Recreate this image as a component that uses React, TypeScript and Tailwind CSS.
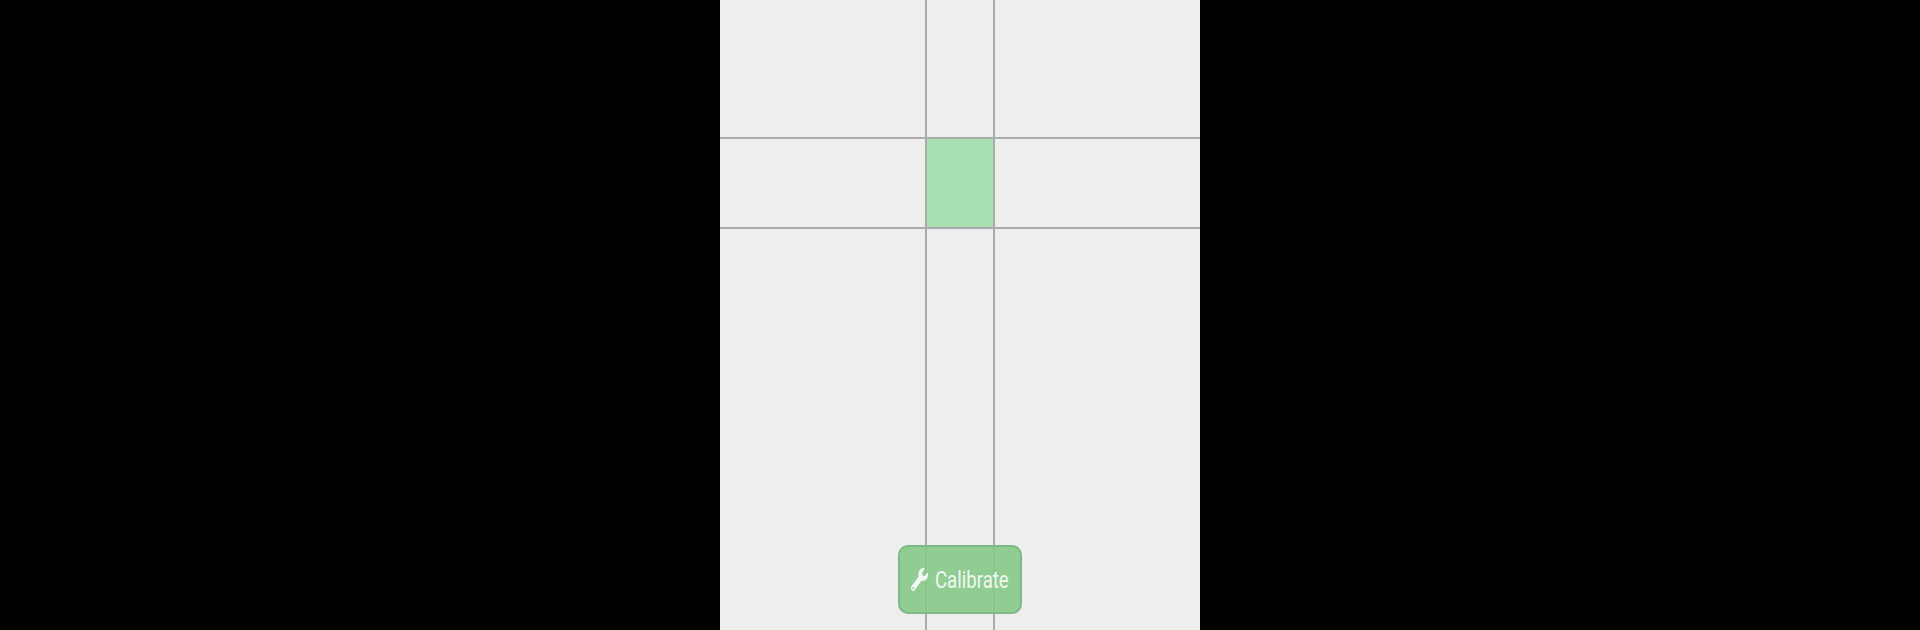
import { FaWrench } from "react-icons/fa";

export default function App() {
  const line = "bg-[#a9aca9]";
  return (
    <div className="h-[630px] w-[1920px] overflow-hidden bg-black flex justify-center">
      <div className="relative w-[480px] h-[630px] bg-[#eeeeee] grid grid-cols-[205px_2px_66px_2px_205px] grid-rows-[137px_2px_88px_2px_401px]">
        <div />
        <div className={line} />
        <div />
        <div className={line} />
        <div />
        <div className={`col-span-5 ${line}`} />
        <div />
        <div className={line} />
        <div className="bg-[#a9e0b1]" />
        <div className={line} />
        <div />
        <div className={`col-span-5 ${line}`} />
        <div />
        <div className={line} />
        <div />
        <div className={line} />
        <div />
        <div className="absolute left-[178px] top-[545px] w-[124px] h-[69px] rounded-[10px] border-2 border-[#7fb984] bg-[#86c888]/90 flex items-center justify-center gap-[7px] text-white font-['Roboto',sans-serif]">
          <FaWrench preserveAspectRatio="none" className="w-[17px] h-[23px] text-[#f2f8f2]" />
          <span className="text-[24px] leading-none w-[74px] whitespace-nowrap origin-left scale-x-[0.775] text-[#f0f8f0]">Calibrate</span>
        </div>
      </div>
    </div>
  );
}
